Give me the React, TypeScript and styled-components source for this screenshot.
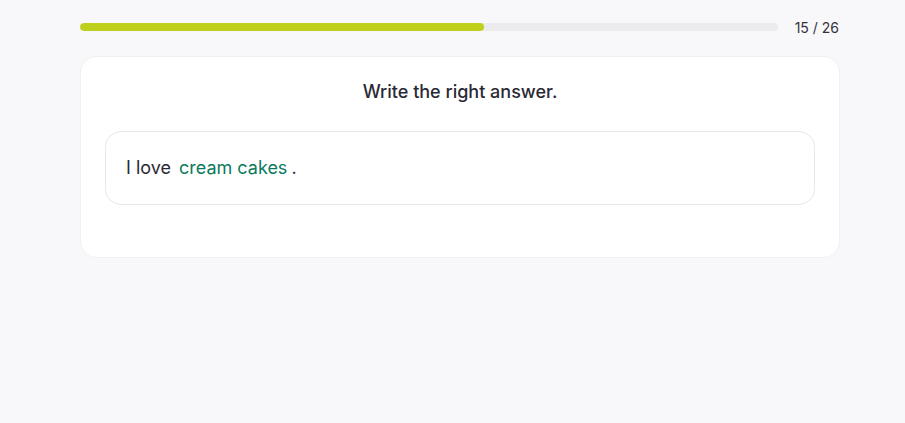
import styled, { createGlobalStyle } from "styled-components"

const GlobalStyle = createGlobalStyle`
    html, body {
        margin: 0;
        padding: 0;
        background-color: #f8f8fa;
        font-family: Inter, "Noto Sans", sans-serif;
        color: #24232f;
    }
`

const Page = styled.div`
    width: 760px;
    padding: 17px 0 0 80px;
`

const ProgressRow = styled.div`
    display: flex;
    align-items: center;
    gap: 17px;
    height: 20px;
`

const Track = styled.div`
    flex: 1;
    height: 8px;
    border-radius: 4px;
    background-color: #ebebee;
    overflow: hidden;
`

const Fill = styled.div`
    height: 100%;
    border-radius: 4px;
    background-color: #bed01b;
`

const Counter = styled.span`
    font-size: 14px;
    color: #33323d;
    white-space: nowrap;
    padding-right: 1px;
`

const Card = styled.div`
    margin-top: 19px;
    background-color: #ffffff;
    border: 1px solid #f0f0f3;
    border-radius: 16px;
    padding: 22px 24px 52px 24px;
`

const Title = styled.h2`
    margin: 0;
    text-align: center;
    font-size: 18px;
    font-weight: 500;
    line-height: 26px;
    color: #2a2935;
`

const AnswerBox = styled.div`
    margin-top: 26px;
    border: 1px solid #e8e8ec;
    border-radius: 16px;
    padding: 23px 20px;
    font-size: 18px;
    line-height: 26px;
    display: flex;
    align-items: center;
`

const Word = styled.span<{ $answer?: boolean }>`
    color: ${(p) => (p.$answer ? "#0c7a5c" : "#2a2935")};
    margin-right: ${(p) => (p.$answer ? "4px" : "0")};
    margin-left: ${(p) => (p.$answer ? "8px" : "0")};
`

const App = () => {
    const current = 15
    const total = 26

    return (
        <>
            <GlobalStyle />
            <Page>
                <ProgressRow>
                    <Track>
                        <Fill style={{ width: `${(current / total) * 100 + 0.15}%` }} />
                    </Track>
                    <Counter>{current} / {total}</Counter>
                </ProgressRow>
                <Card>
                    <Title>Write the right answer.</Title>
                    <AnswerBox>
                        <Word>I love</Word>
                        <Word $answer>cream cakes</Word>
                        <Word>.</Word>
                    </AnswerBox>
                </Card>
            </Page>
        </>
    )
}

export default App
